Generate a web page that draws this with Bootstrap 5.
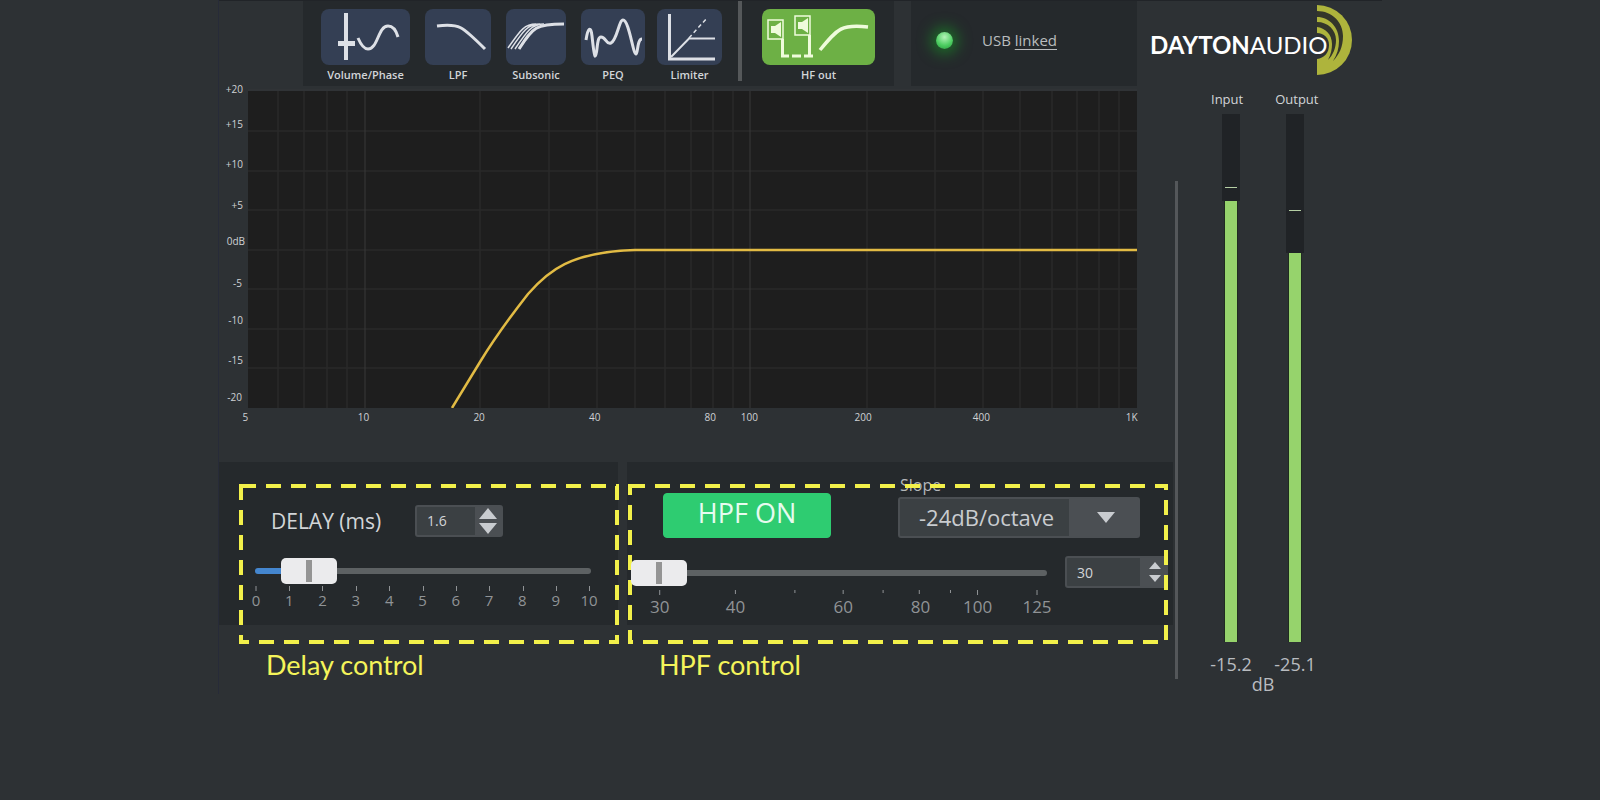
<!DOCTYPE html>
<html lang="en">
<head>
<meta charset="utf-8">
<meta name="viewport" content="width=device-width, initial-scale=1">
<title>Dayton Audio DSP</title>
<link href="https://cdn.jsdelivr.net/npm/bootstrap@5.3.0/dist/css/bootstrap.min.css" rel="stylesheet">
<style>
  body { background: #2d3134; color: #d2d5d8; font-family: "Open Sans", "Noto Sans", sans-serif; }
  .app { max-width: 1164px; border-left: 1px solid #272b38; }
  .panel { background: #25292c; }

  /* header */
  .app-header { height: 86px; border-top: 1px solid #212428; }
  .brand-lead { width: 84px; }
  .toolbar { width: 591px; padding: 8px 0 0 18px; }
  .tool { border: 0; padding: 0; background: none; color: #d2d5d8; font-size: 11px; font-weight: 600; line-height: 20px; }
  .tool svg { display: block; height: 56px; border-radius: 8px; background: #343f54; fill: none; stroke: #dde0e6; stroke-width: 3; }
  .tool.active svg { background: #6db045; stroke: #effbdc; }
  .tool-gap { margin-right: 15px; }
  .tool-sep { width: 4px; height: 80px; background: #55585a; margin: -8px 20px 0 16px; }
  .usb { margin-left: 17px; padding: 0 0 6px 25px; font-size: 15px; color: #b9bcbe; }
  .usb a { color: inherit; text-underline-offset: 3px; }
  .led { width: 17px; height: 17px; margin-right: 29px; border-radius: 50%; background: radial-gradient(circle at 50% 30%, #b4f3b8, #4fcf63 55%, #249b3a); box-shadow: 0 0 14px 5px #1d6b28; }
  .logo { width: 245px; padding: 29px 0 0 13px; font-family: Lato, sans-serif; font-size: 24px; line-height: 30px; color: #fff; }
  .logo svg { left: 180px; top: 4px; }
  .logo-text { z-index: 1; }

  /* chart */
  .chart-area { padding: 3px 36px 0 0; }
  .axis-y { width: 29px; height: 319px; }
  .plot { height: 319px; background: #1e1e1e; border-top: 2px solid #303336; }
  .axis-x { height: 54px; width: calc(100% - 29px); margin-left: 29px; }
  .axis-y text, .axis-x text { font-size: 10px; fill: #cfd2d4; }
  .overflow-svg { overflow: visible; display: block; }

  /* lower panels */
  .ctl-panel { height: 163px; }
  .delay-panel { width: 399px; }
  .hpf-panel { margin-left: 9px; }
  .callout { inset: 24px 1px -17px 22px; pointer-events: none; }
  .callout.hpf { inset: 24px 7px -17px 3px; }
  .callout svg { overflow: visible; }
  .caption-text { font-family: Lato, sans-serif; font-size: 27px; line-height: 40px; color: #f4f45a; padding: 20px 0 0 47px; }
  .hpf-panel .caption-text { padding-left: 32px; }
  .delay-row { padding: 25px 0 0 52px; height: 92px; }
  .delay-row label { font-size: 21px; line-height: 36px; width: 144px; }

  .spin { background: #3b4043; border: 2px solid #4b4f53; border-radius: 3px; height: 32px; width: 88px; }
  .spin.wide { width: 103px; margin: 0 5px 0 18px; }
  .spin input { border: 0; background: none; color: #d2d5d8; font-size: 14px; padding: 0 0 0 10px; width: 10px; outline: 0; }
  .spin-btns { background: #4b4f53; }
  .spin-btns button { border: 0; background: none; padding: 0; line-height: 0; }
  .spin-btns svg { fill: #c9ccd0; }

  .slider { height: 26px; }
  .slider::before { content: ""; position: absolute; inset: 10px 0; border-radius: 3px; background: #5d6163; }
  .slider.delay { margin: 0 27px 0 36px; }
  .slider.delay::before { background: linear-gradient(90deg, #4486cf 16%, #5d6163 16%); }
  .slider input { appearance: none; background: none; height: 26px; width: 100%; margin: 0; position: relative; display: block; }
  .slider.delay input { width: calc(100% + 56px); margin: 0 -28px; }
  .slider input::-webkit-slider-thumb { appearance: none; width: 56px; height: 26px; border: 0; border-radius: 5px; background: linear-gradient(90deg, transparent 25px, #949494 25px 31px, transparent 31px) center / 100% 22px no-repeat, #ebebed; }
  .slider input::-moz-range-thumb { width: 56px; height: 26px; border: 0; border-radius: 5px; background: #ebebed; }
  .scale { fill: #909396; }
  .scale line { stroke: #909396; stroke-width: 1; }
  .scale text { text-anchor: middle; }
  .scale.delay { margin: 0 31px 0 37px; font-size: 15px; width: 333px; }
  .hpf-left { padding-left: 4px; }
  .hpf-row { padding: 31px 33px 0 36px; height: 94px; }
  .btn-hpf { --bs-btn-bg: #2ecc71; --bs-btn-color: #e6fbef; --bs-btn-hover-bg: #29b865; --bs-btn-hover-color: #fff; --bs-btn-border-color: #2ecc71; width: 168px; height: 45px; font-size: 27px; line-height: 32px; padding: 2px 0 8px; border-radius: 4px; }
  .slope { width: 242px; margin-top: -20px; }
  .slope label { font-size: 16px; line-height: 24px; color: #b4b7ba; padding-left: 2px; display: block; }
  .slope select { appearance: none; width: 100%; height: 41px; padding: 0 0 0 19px; font-size: 22px; color: #c9ccd0; border: 2px solid #4b4f53; border-radius: 3px; background: url("data:image/svg+xml,%3Csvg xmlns='http://www.w3.org/2000/svg' width='18' height='11'%3E%3Cpath d='M0 0h18l-9 11z' fill='%23c9ccd0'/%3E%3C/svg%3E") right 23px center no-repeat, linear-gradient(#4b4f53, #4b4f53) right / 69px 100% no-repeat, #3b4043; }
  .scale.hpf { font-size: 17px; height: 36px; }

  /* meters */
  .meters { width: 209px; }
  .divider { width: 3px; height: 498px; margin: 95px 0 0 2px; background: #54575a; }
  .meter-block { width: 128px; margin-left: 21px; }
  .meter-names { font-size: 13px; line-height: 26px; padding: 0 0 2px 12px; gap: 32px; }
  .meter-cell { width: 64px; }
  .meter { height: 528px; width: 18px; background: #202326; }
  .meter .level { left: 3px; right: 3px; bottom: 0; background: #96d36c; }
  .meter .peak { left: 3px; right: 3px; height: 1px; background: #b5cfa4; }
  .meter .idle { background: #1f2b20; inset: 0 2px; }
  .meter .surround { background: #2d3134; inset: 0; }
  .meter-val { font-size: 18px; line-height: 20px; color: #b9bcc0; }
</style>
</head>
<body>
<div class="app mx-auto">
  <header class="app-header d-flex">
    <div class="brand-lead flex-shrink-0"></div>
    <nav class="toolbar panel d-flex align-items-start flex-shrink-0" aria-label="Filters">
      <button class="tool tool-gap" type="button"><svg width="89" viewBox="0 0 89 56" aria-hidden="true"><path d="M25 4v47" stroke-width="4"/><path d="M17 34.500h17" stroke-width="5"/><path d="M37 29C40 36 43 40 47 40C57 40 57 17 67 17C71 17 75 21 77 28"/></svg>Volume/Phase</button>
      <button class="tool tool-gap" type="button"><svg width="66" viewBox="0 0 66 56" aria-hidden="true"><path d="M12 17C34 14 37 17 60 40"/></svg>LPF</button>
      <button class="tool tool-gap" type="button"><svg width="60" viewBox="0 0 60 56" aria-hidden="true"><path d="M2 39C14 22 18 15 30 15M5 40C17 22 22 15 34 15M9 40C21 22 26 15 38 15" stroke-width="1.500"/><path d="M13 40C27 18 30 15 58 15"/></svg>Subsonic</button>
      <button class="tool me-2" type="button"><svg width="64" viewBox="0 0 64 56" aria-hidden="true"><path d="M5 31C7 18 10 17 11 27C12 36 13 46 14 47C17 46 15 28 20 28C25 28 25 36 30 34C36 31 38 11 42 11C48 11 52 45 55 45C57 45 56 30 61 30"/></svg>PEQ</button>
      <button class="tool ms-1" type="button"><svg width="65" viewBox="0 0 65 56" aria-hidden="true"><path d="M12.500 5v45H58"/><path d="M14 48L32 29.500H58" stroke-width="2"/><path d="M32 29L50 9" stroke-width="1.500" stroke-dasharray="4 3"/></svg>Limiter</button>
      <div class="tool-sep"></div>
      <button class="tool active" type="button"><svg width="113" viewBox="0 0 113 56" aria-hidden="true"><g stroke-width="1.500"><path d="M6 11h15v19H6zM33 7h15v19H33z"/><path d="M9 17h4l6-4v15l-6-4H9zM36 13h4l6-4v15l-6-4H36z" fill="#effbdc" stroke="none"/></g><path d="M20.500 30V48M47.500 26V48"/><path d="M19 47h8M30 47h9M42 47h9"/><path d="M58 41C76 19 80 15 106 18" stroke-width="3.500"/></svg>HF out</button>
    </nav>
    <div class="usb panel d-flex align-items-center flex-fill"><span class="led"></span><span>USB <a href="#">linked</a></span></div>
    <div class="logo position-relative flex-shrink-0">
      <svg class="position-absolute" width="36" height="70" viewBox="0 0 36 70" aria-hidden="true">
        <path d="M0 0A35 35 0 0 1 0 70Z" fill="#aeb43c"/>
        <path d="M0 6C15 6 26 17 26 31C26 42 22 50 16 56C20 50 22 43 22 36C22 22 12 12 0 12Z" fill="#34362a"/>
        <path d="M0 17C11 17 19 25 19 35C19 43 16 50 11 55C14 49 15 44 15 39C15 29 8 23 0 22Z" fill="#34362a"/>
        <path d="M0 28C7 28 12 33 12 40C12 48 7 53 0 54Z" fill="#2d3134"/>
      </svg>
      <span class="logo-text position-relative"><b>DAYTON</b>AUDIO</span>
    </div>
  </header>

  <div class="d-flex">
    <main class="flex-fill">
      <div class="chart-area">
        <div class="d-flex">
          <svg class="axis-y overflow-svg flex-shrink-0" text-anchor="end" aria-label="Gain">
            <text x="24" y="4">+20</text><text x="24" y="39">+15</text><text x="24" y="79">+10</text><text x="24" y="120">+5</text><text x="26" y="156">0dB</text><text x="23" y="198">-5</text><text x="24" y="235">-10</text><text x="24" y="275">-15</text><text x="23" y="312">-20</text>
          </svg>
          <div class="plot flex-fill">
            <svg class="d-block" width="100%" height="317" viewBox="0 1 889 317" preserveAspectRatio="none" fill="none" aria-label="Frequency response">
              <g stroke="#2a2a2a" stroke-width="1.500">
                <path vector-effect="non-scaling-stroke" d="M0 41H889M0 81H889M0 120H889M0 160H889M0 199H889M0 239H889M0 278H889"/>
                <path vector-effect="non-scaling-stroke" d="M30 0V318M56 0V318M79 0V318M99 0V318M232 0V318M301 0V318M349 0V318M387 0V318M417 0V318M443 0V318M465 0V318M485 0V318M619 0V318M687 0V318M735 0V318M772 0V318M804 0V318M829 0V318M851 0V318M871 0V318"/>
              </g>
              <path vector-effect="non-scaling-stroke" d="M117 0V318M502 0V318" stroke="#393939"/>
              <path vector-effect="non-scaling-stroke" stroke="#e2bb44" stroke-width="2.500" stroke-linejoin="round" d="M204 318L232 272C248 246 262 227 280 204C300 181 322 162 387 160H889"/>
            </svg>
          </div>
        </div>
        <svg class="axis-x overflow-svg" text-anchor="middle" aria-label="Frequency">
          <text x="-.3%" y="13">5</text><text x="13%" y="13">10</text><text x="26%" y="13">20</text><text x="39%" y="13">40</text><text x="52%" y="13">80</text><text x="56.400%" y="13">100</text><text x="69.200%" y="13">200</text><text x="82.500%" y="13">400</text><text x="99.400%" y="13">1K</text>
        </svg>
      </div>

      <div class="d-flex">
        <section class="delay-panel flex-shrink-0">
          <div class="ctl-panel panel position-relative">
            <div class="delay-row d-flex align-items-center">
              <label for="delay">DELAY (ms)</label>
              <div class="spin d-flex">
                <input id="delay" class="flex-fill" type="text" inputmode="decimal" value="1.6">
                <div class="spin-btns d-flex flex-column justify-content-between ps-1 pe-1">
                  <button type="button" aria-label="Increase delay"><svg width="18" height="12"><path d="M0 12L9 1l9 11z"/></svg></button>
                  <button type="button" aria-label="Decrease delay"><svg width="18" height="12"><path d="M0 0l9 11 9-11z"/></svg></button>
                </div>
              </div>
            </div>
            <div class="slider delay position-relative mt-1"><input type="range" min="0" max="10" step="0.1" value="1.6" aria-label="Delay"></div>
            <svg class="scale delay overflow-svg" height="30">
              <path d="M0 2v5M33.500 2v5M66.500 2v5M100.500 2v5M133.500 2v5M167.500 2v5M200.500 2v5M233.500 2v5M267.500 2v5M300.500 2v5M333.500 2v5" stroke="#909396"/>
              <text x="0" y="22">0</text><text x="10%" y="22">1</text><text x="20%" y="22">2</text><text x="30%" y="22">3</text><text x="40%" y="22">4</text><text x="50%" y="22">5</text><text x="60%" y="22">6</text><text x="70%" y="22">7</text><text x="80%" y="22">8</text><text x="90%" y="22">9</text><text x="100%" y="22">10</text>
            </svg>
            <div class="callout position-absolute"><svg class="d-block" width="100%" height="100%"><rect width="100%" height="100%" fill="none" stroke="#f2f04a" stroke-width="4" stroke-dasharray="15 10"/></svg></div>
          </div>
          <div class="caption-text">Delay control</div>
        </section>

        <section class="hpf-panel flex-fill">
          <div class="ctl-panel panel position-relative">
            <div class="callout hpf position-absolute"><svg class="d-block" width="100%" height="100%"><rect width="100%" height="100%" fill="none" stroke="#f2f04a" stroke-width="4" stroke-dasharray="15 10"/></svg></div>
            <div class="hpf-row d-flex justify-content-between align-items-start">
              <button class="btn btn-hpf" type="button">HPF ON</button>
              <div class="slope">
                <label for="slope">Slope</label>
                <select id="slope"><option>-24dB/octave</option></select>
              </div>
            </div>
            <div class="hpf-left d-flex">
              <div class="flex-fill">
                <div class="slider position-relative mt-1"><input type="range" min="30" max="125" value="30" aria-label="High-pass frequency"></div>
                <svg class="scale hpf overflow-svg" width="100%">
                  <line x1="6.900%" x2="6.900%" y1="4" y2="9"/><line x1="25.100%" x2="25.100%" y1="4" y2="8"/><line x1="39.400%" x2="39.400%" y1="4" y2="7"/><line x1="51%" x2="51%" y1="4" y2="8"/><line x1="60.600%" x2="60.600%" y1="4" y2="7"/><line x1="69.300%" x2="69.300%" y1="4" y2="8"/><line x1="76.800%" x2="76.800%" y1="4" y2="7"/><line x1="83.300%" x2="83.300%" y1="4" y2="9"/><line x1="97.600%" x2="97.600%" y1="4" y2="9"/>
                  <text x="6.900%" y="27">30</text><text x="25.100%" y="27">40</text><text x="51%" y="27">60</text><text x="69.600%" y="27">80</text><text x="83.300%" y="27">100</text><text x="97.600%" y="27">125</text>
                </svg>
              </div>
              <div class="spin wide d-flex flex-shrink-0">
                <input id="hpf" class="flex-fill" type="text" inputmode="numeric" value="30" aria-label="High-pass frequency value">
                <div class="spin-btns d-flex flex-column justify-content-around ps-2 pe-1">
                  <button type="button" aria-label="Increase frequency"><svg width="14" height="8"><path d="M1 8l6-7 6 7z"/></svg></button>
                  <button type="button" aria-label="Decrease frequency"><svg width="14" height="8"><path d="M1 0l6 7 6-7z"/></svg></button>
                </div>
              </div>
            </div>
          </div>
          <div class="caption-text">HPF control</div>
        </section>
      </div>
    </main>

    <aside class="meters d-flex flex-shrink-0">
      <div class="divider"></div>
      <div class="meter-block">
        <div class="meter-names d-flex"><span>Input</span><span>Output</span></div>
        <div class="d-flex text-center">
          <div class="meter-cell">
            <div class="meter position-relative mx-auto"><div class="surround position-absolute" style="top:87px"></div><div class="idle position-absolute" style="top:87px"></div><div class="peak position-absolute" style="top:73px"></div><div class="level position-absolute" style="height:441px"></div></div>
            <div class="meter-val pt-2 mt-1">-15.2</div>
          </div>
          <div class="meter-cell">
            <div class="meter position-relative mx-auto"><div class="surround position-absolute" style="top:139px"></div><div class="idle position-absolute" style="top:139px"></div><div class="peak position-absolute" style="top:96px"></div><div class="level position-absolute" style="height:389px"></div></div>
            <div class="meter-val pt-2 mt-1">-25.1</div>
          </div>
        </div>
        <div class="meter-val text-center">dB</div>
      </div>
    </aside>
  </div>
</div>
<script src="https://cdn.jsdelivr.net/npm/bootstrap@5.3.0/dist/js/bootstrap.bundle.min.js"></script>
</body>
</html>
